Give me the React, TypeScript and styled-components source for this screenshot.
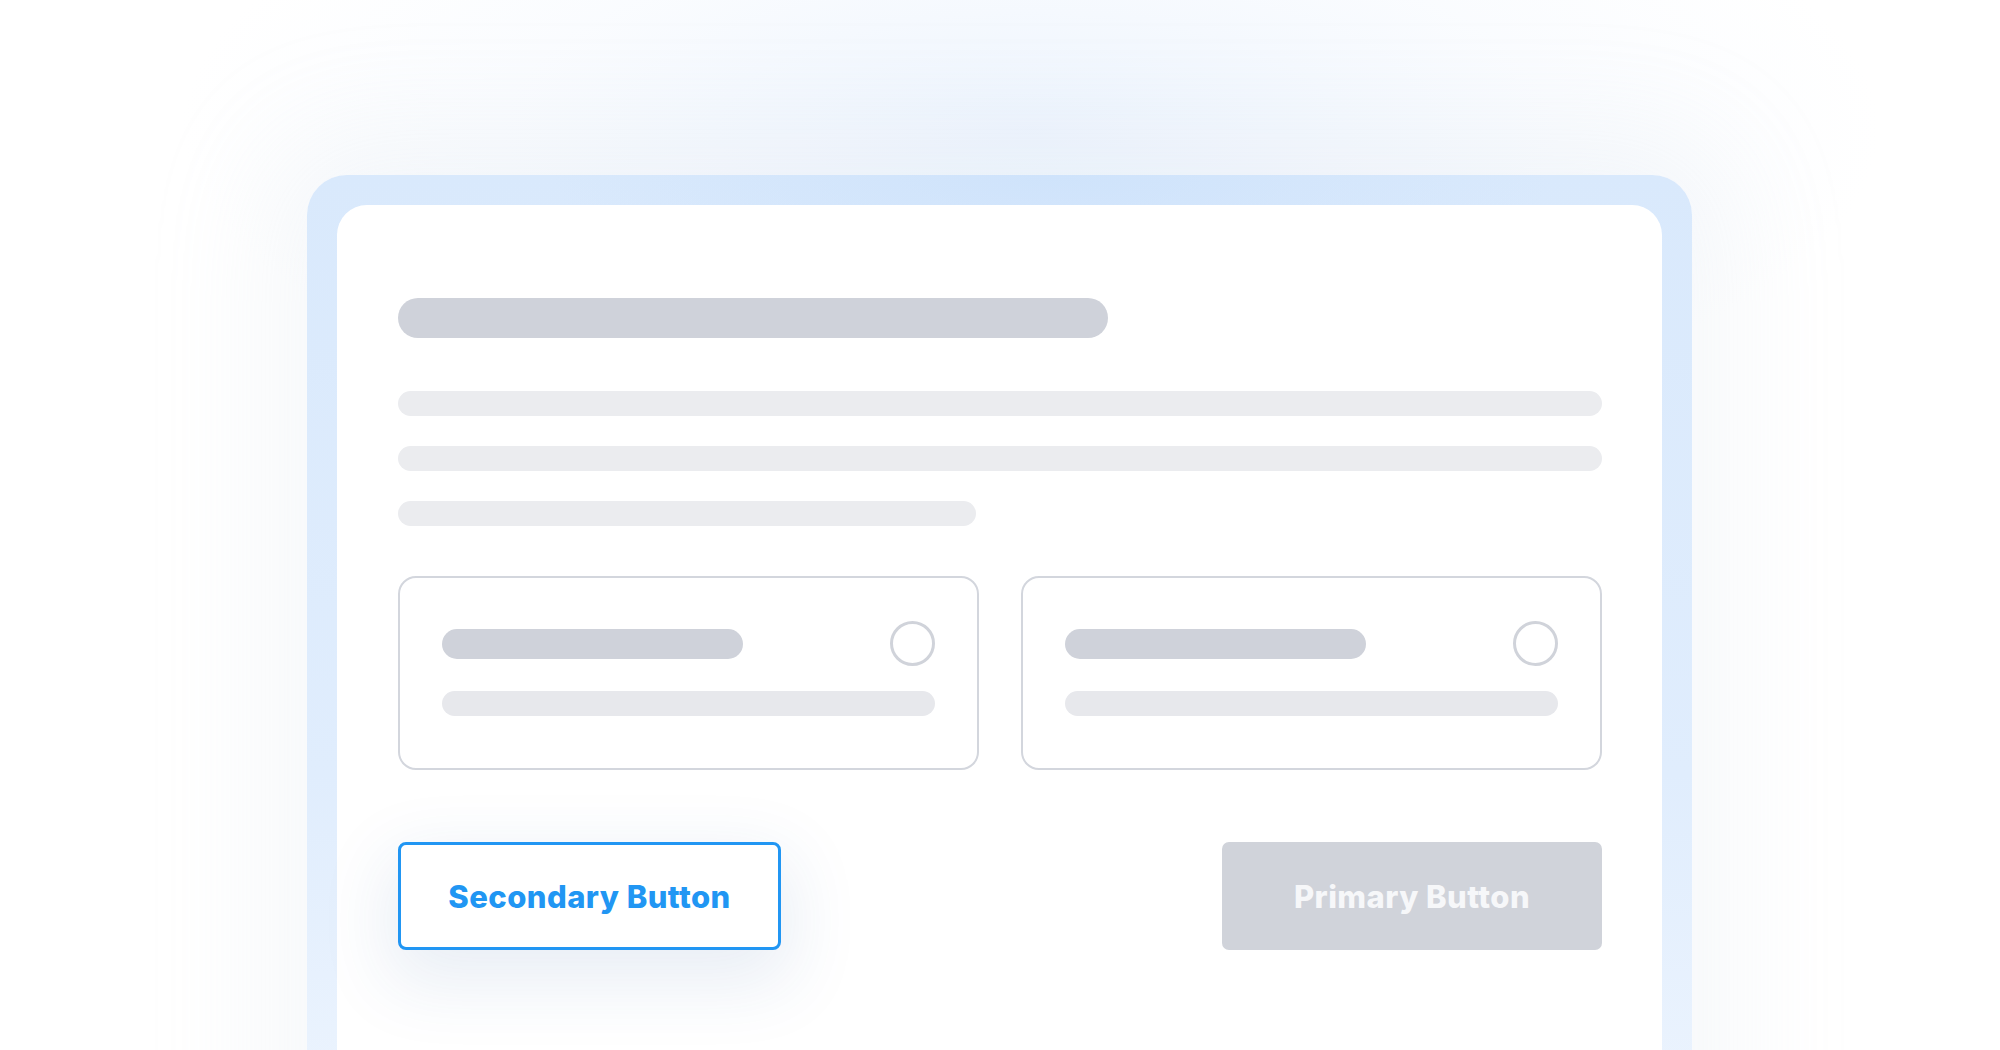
import React from "react";
import styled, { createGlobalStyle } from "styled-components";

const Global = createGlobalStyle`
  html, body {
    margin: 0;
    padding: 0;
    height: 100%;
    overflow: hidden;
  }
  body {
    background:
      radial-gradient(ellipse 850px 320px at 1030px 130px, rgba(220, 234, 252, 0.5), rgba(234, 242, 253, 0.25) 60%, rgba(255,255,255,0) 100%),
      #ffffff;
    font-family: Inter, "Open Sans", sans-serif;
  }
`;

const Stage = styled.div`
  width: 2000px;
  height: 1050px;
  overflow: hidden;
  padding-top: 175px;
  padding-left: 307px;
  box-sizing: border-box;
`;

const Frame = styled.div`
  width: 1385px;
  height: 1000px;
  box-sizing: border-box;
  padding: 30px 30px 0 30px;
  border-radius: 40px 40px 0 0;
  background:
    radial-gradient(ellipse 500px 120px at 745px 0px, rgba(205, 226, 251, 0.85), rgba(205, 226, 251, 0) 100%),
    linear-gradient(180deg, #d9e9fc 0%, #e0edfd 60%, #eef5fe 100%);
  box-shadow: 0 0 120px 40px rgba(200, 210, 225, 0.16);
`;

const Sheet = styled.div`
  height: 100%;
  box-sizing: border-box;
  background: #ffffff;
  border-radius: 30px 30px 0 0;
  padding: 93px 60px 0 61px;
  display: flex;
  flex-direction: column;
`;

const Bar = styled.div<{ $w?: string; $h: number; $tone: string; $mb?: number }>`
  width: ${(p) => p.$w ?? "100%"};
  height: ${(p) => p.$h}px;
  border-radius: ${(p) => p.$h / 2}px;
  background: ${(p) => p.$tone};
  margin-bottom: ${(p) => p.$mb ?? 0}px;
  flex-shrink: 0;
`;

const Cards = styled.div`
  display: grid;
  grid-template-columns: 1fr 1fr;
  gap: 42px;
  margin-top: 50px;
`;

const Card = styled.div`
  height: 194px;
  box-sizing: border-box;
  border: 2px solid #d3d6dd;
  border-radius: 18px;
  padding: 43px 42px 0 42px;
  background: #ffffff;
`;

const CardHead = styled.div`
  display: flex;
  align-items: center;
  justify-content: space-between;
  height: 45px;
  margin-bottom: 25px;
`;

const Radio = styled.div`
  width: 45px;
  height: 45px;
  box-sizing: border-box;
  border-radius: 50%;
  border: 3px solid #d0d3da;
`;

const Actions = styled.div`
  display: flex;
  justify-content: space-between;
  margin-top: 72px;
`;

const Button = styled.button<{ $primary?: boolean }>`
  width: ${(p) => (p.$primary ? "380px" : "383px")};
  height: 108px;
  box-sizing: border-box;
  border-radius: ${(p) => (p.$primary ? "7px" : "8px")};
  border: ${(p) => (p.$primary ? "none" : "3px solid #2196f3")};
  background: ${(p) => (p.$primary ? "#d0d3da" : "#ffffff")};
  color: ${(p) => (p.$primary ? "#f6f7f9" : "#2196f3")};
  font-family: Inter, "Open Sans", sans-serif;
  font-weight: 800;
  font-size: 31px;
  letter-spacing: 0.45px;
  display: flex;
  align-items: center;
  justify-content: center;
  box-shadow: ${(p) =>
    p.$primary ? "none" : "0 24px 70px 10px rgba(40, 90, 160, 0.10)"};
  cursor: pointer;
`;

export default function App() {
  return (
    <>
      <Global />
      <Stage>
        <Frame>
          <Sheet>
            <Bar $w="710px" $h={40} $tone="#cfd2da" $mb={53} />
            <Bar $h={25} $tone="#ebecef" $mb={30} />
            <Bar $h={25} $tone="#ebecef" $mb={30} />
            <Bar $w="578px" $h={25} $tone="#ebecef" />
            <Cards>
              {[0, 1].map((i) => (
                <Card key={i}>
                  <CardHead>
                    <Bar $w="301px" $h={30} $tone="#cfd2da" />
                    <Radio />
                  </CardHead>
                  <Bar $h={25} $tone="#e7e8ec" />
                </Card>
              ))}
            </Cards>
            <Actions>
              <Button>Secondary Button</Button>
              <Button $primary>Primary Button</Button>
            </Actions>
          </Sheet>
        </Frame>
      </Stage>
    </>
  );
}
